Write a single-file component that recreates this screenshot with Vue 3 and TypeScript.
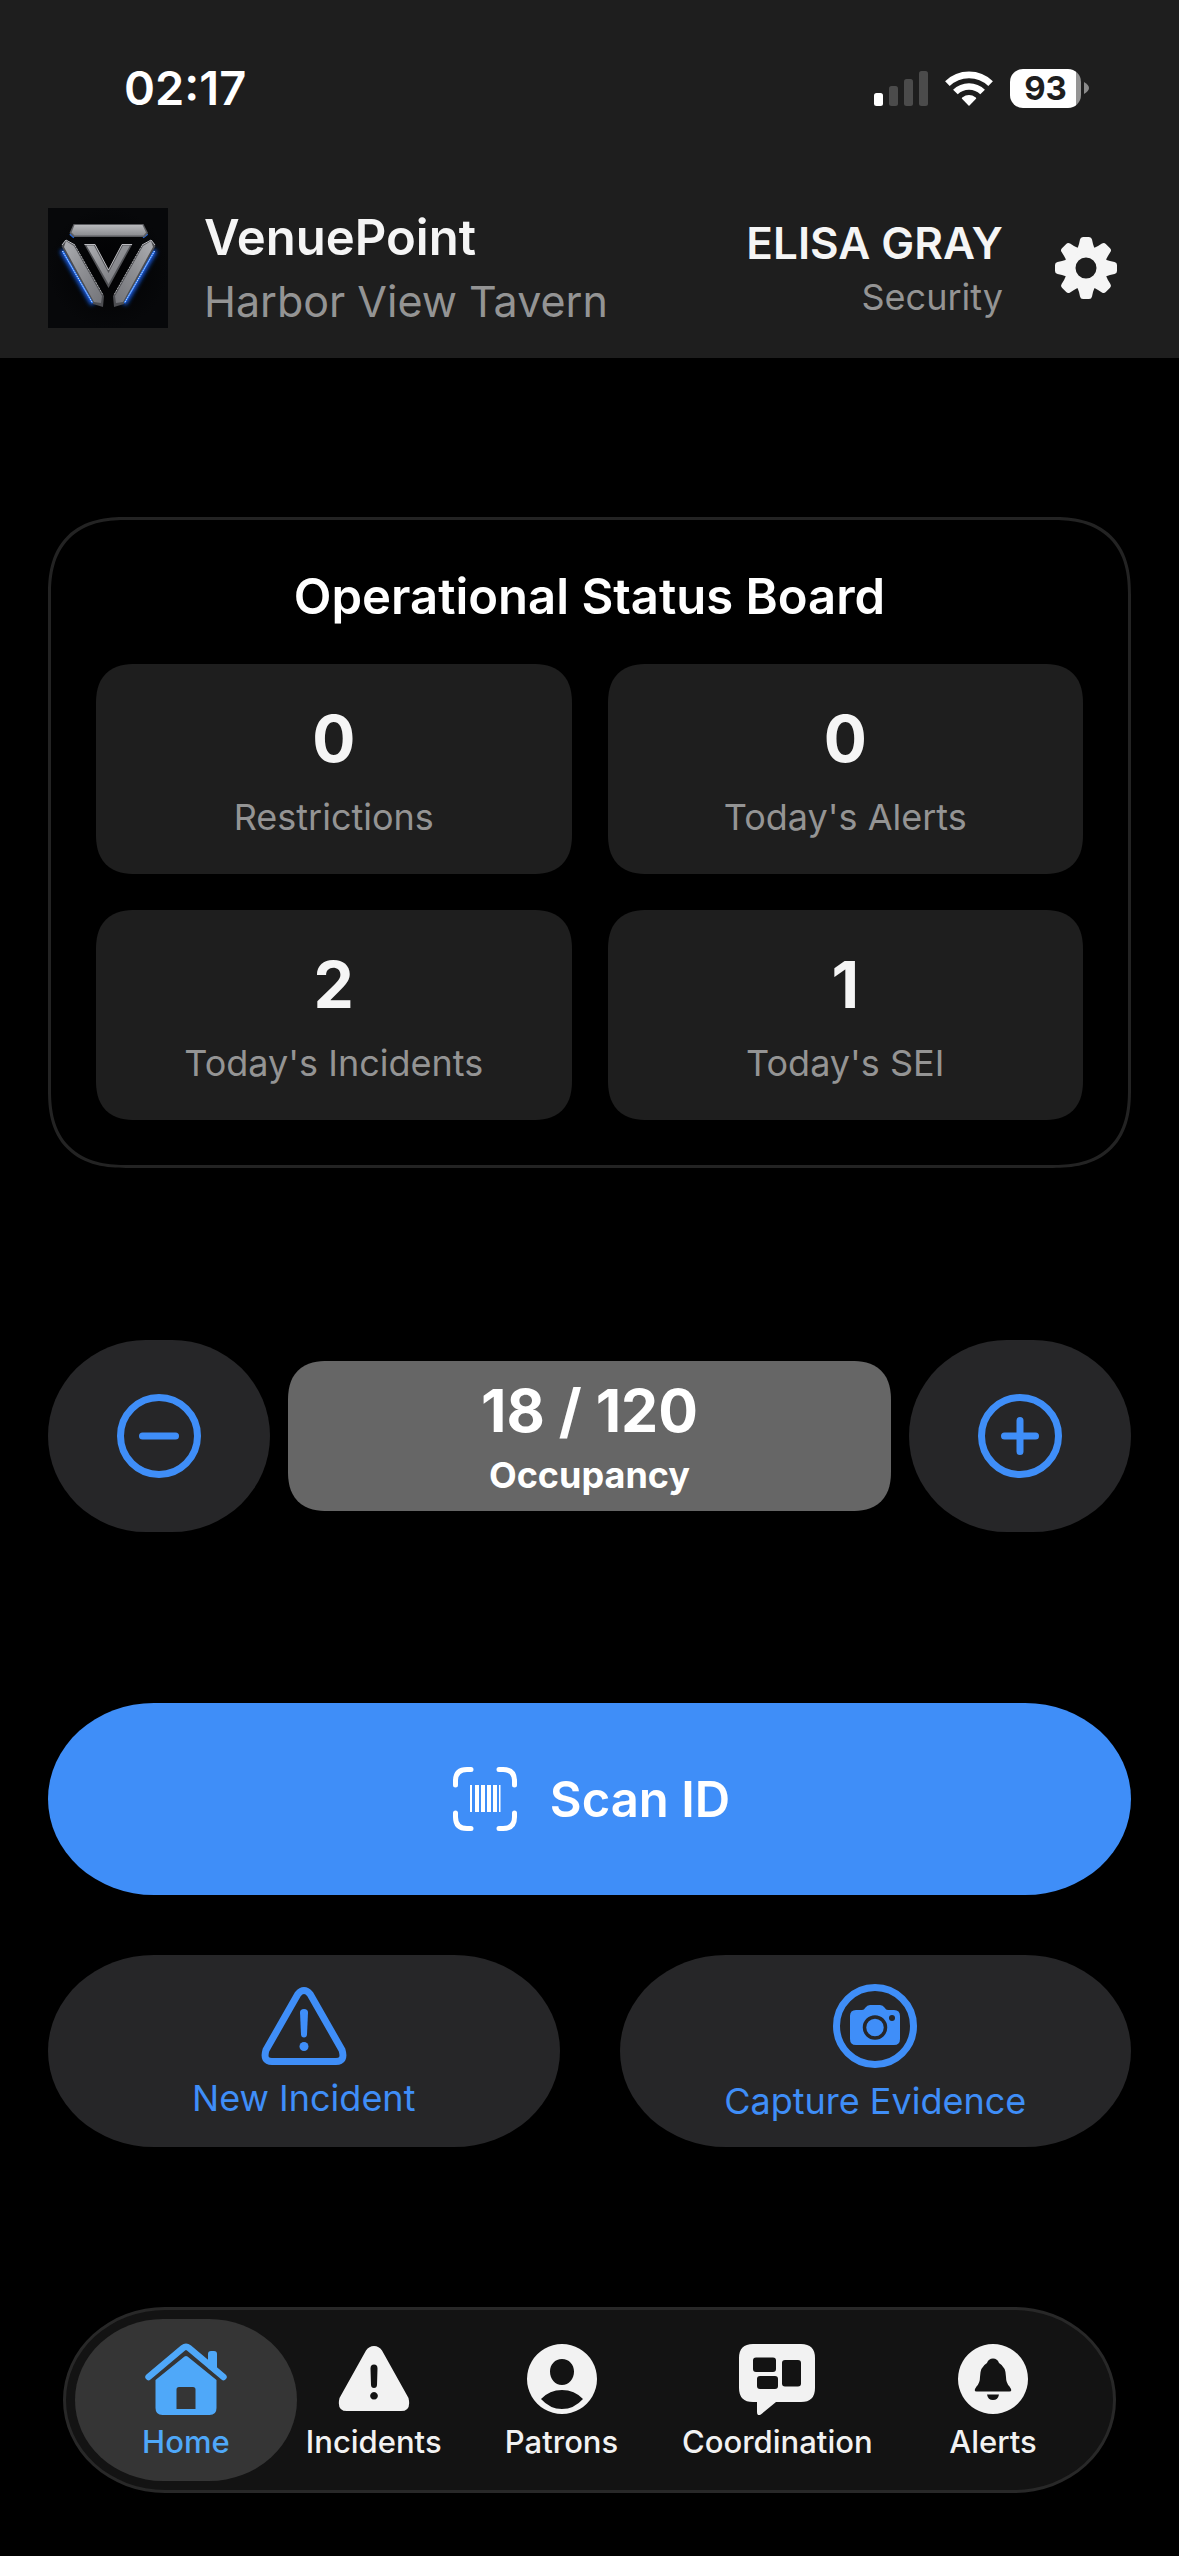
<script setup lang="ts">
import { ref } from 'vue'

interface Stat {
  value: number
  label: string
}

type TabId = 'home' | 'incidents' | 'patrons' | 'coordination' | 'alerts'

interface Tab {
  id: TabId
  label: string
}

const stats: Stat[] = [
  { value: 0, label: 'Restrictions' },
  { value: 0, label: "Today's Alerts" },
  { value: 2, label: "Today's Incidents" },
  { value: 1, label: "Today's SEI" },
]

const tabs: Tab[] = [
  { id: 'home', label: 'Home' },
  { id: 'incidents', label: 'Incidents' },
  { id: 'patrons', label: 'Patrons' },
  { id: 'coordination', label: 'Coordination' },
  { id: 'alerts', label: 'Alerts' },
]

const capacity = 120
const occupancy = ref(18)
const activeTab = ref<TabId>('home')

function changeOccupancy(step: number): void {
  occupancy.value = Math.min(capacity, Math.max(0, occupancy.value + step))
}
</script>

<template>
  <div class="app">
    <header class="header">
      <div class="status-bar">
        <time class="clock">02:17</time>
        <div class="indicators">
          <svg class="signal" viewBox="0 0 54 35" aria-hidden="true">
            <rect x="0" y="22" width="9" height="13" rx="2.5" fill="#fff" />
            <rect x="15" y="15" width="9" height="20" rx="2.5" fill="#4b4b4b" />
            <rect x="30" y="8" width="9" height="27" rx="2.5" fill="#4b4b4b" />
            <rect x="45" y="0" width="9" height="35" rx="2.5" fill="#4b4b4b" />
          </svg>
          <svg class="wifi" viewBox="0 0 48 35" aria-hidden="true">
            <g fill="none" stroke="#fff" stroke-width="6.6">
              <path d="M2.4 12.6 A31 31 0 0 1 45.6 12.6" />
              <path d="M10.4 21 A19.4 19.4 0 0 1 37.6 21" />
            </g>
            <path d="M24 35 L17 27.8 Q16.4 27 17.2 26.4 Q24 21.8 30.8 26.4 Q31.6 27 31 27.8 Z" fill="#fff" />
          </svg>
          <div class="battery">
            <span class="battery-level">93</span>
            <svg class="battery-cap" viewBox="0 0 5 12" aria-hidden="true">
              <path d="M0 0 Q5 3 5 6 Q5 9 0 12 Z" fill="#8a8a8a" />
            </svg>
          </div>
        </div>
      </div>

      <div class="identity">
        <svg class="logo" viewBox="0 0 120 120" role="img" aria-label="VenuePoint logo">
          <defs>
            <linearGradient id="steel" x1="0" y1="0" x2="1" y2="1">
              <stop offset="0" stop-color="#acadb1" />
              <stop offset="0.5" stop-color="#8d8e92" />
              <stop offset="1" stop-color="#74757a" />
            </linearGradient>
            <linearGradient id="steel-bar" x1="0" y1="0" x2="0" y2="1">
              <stop offset="0" stop-color="#b8b9bc" />
              <stop offset="1" stop-color="#8b8c90" />
            </linearGradient>
            <radialGradient id="plate">
              <stop offset="0" stop-color="#010102" />
              <stop offset="1" stop-color="#07080a" />
            </radialGradient>
            <filter id="glow" x="-50%" y="-20%" width="200%" height="140%">
              <feGaussianBlur stdDeviation="2" />
            </filter>
            <g id="wing">
              <path d="M14 42 L45 96" stroke="#1a62f0" stroke-width="5" filter="url(#glow)" />
              <path d="M17 32 L13.5 38 L45 96 L55 99 L56 88 L27 37 Z" fill="#4c4d51" />
              <path d="M18 33 L16 39 L46 94 L53 95 L54 88 L26 38 Z" fill="url(#steel)" />
              <path d="M14.500 43 L44.500 95" stroke="#2f7bf5" stroke-width="1.6" />
              <path d="M14.500 43 L44.500 95" stroke="#cfe0ff" stroke-width="1" stroke-dasharray="1.2 1.2" />
              <path d="M27 37.500 L55 87" stroke="#c4c5c8" stroke-width="0.8" stroke-dasharray="2 1" />
              <path d="M14 37 L18 32 L27 37" stroke="#bfc0c4" stroke-width="1" fill="none" />
            </g>
          </defs>
          <rect width="120" height="120" fill="url(#plate)" />
          <path d="M22 26 L26 29.500 M95 29.500 L99.500 26" stroke="#2767d8" stroke-width="2" fill="none" />
          <path d="M25.500 16 H95.500 L100 25 L96.500 29 H25.500 L21.500 25 Z" fill="#5b5c60" />
          <path d="M26.500 17 H94.500 L98 24.500 L95.500 27.500 H26.500 L23.500 24.500 Z" fill="url(#steel-bar)" />
          <use href="#wing" />
          <use href="#wing" transform="translate(121 0) scale(-1 1)" />
          <path d="M36 36 H47 L60.500 62 L74 36 H84.500 L60.500 80 Z" fill="#515256" />
          <path d="M38.500 37.500 H46 L60.500 65 L75 37.500 H82 L60.500 76 Z" fill="url(#steel)" />
          <path d="M36.500 36.500 H47 L60.500 62 L74 36.500 H84" stroke="#c9cacd" stroke-width="0.9" fill="none" />
        </svg>
        <div class="venue">
          <h1 class="app-name">VenuePoint</h1>
          <p class="venue-name">Harbor View Tavern</p>
        </div>
        <div class="user">
          <p class="user-name">ELISA GRAY</p>
          <p class="user-role">Security</p>
        </div>
        <button class="settings" type="button" aria-label="Settings">
          <svg viewBox="-31 -31 62 62" fill="#f5f5f5" aria-hidden="true">
            <circle r="16" fill="none" stroke="#f5f5f5" stroke-width="11" />
            <path
              v-for="n in 8"
              :key="n"
              :transform="`rotate(${n * 45})`"
              d="M-11 -17 Q-7.500 -20 -7 -24 L-6 -28.500 Q-5.500 -31 -3 -31 H3 Q5.500 -31 6 -28.500 L7 -24 Q7.500 -20 11 -17 Z"
            />
          </svg>
        </button>
      </div>
    </header>

    <main class="content">
      <section class="board" aria-labelledby="board-title">
        <h2 id="board-title" class="board-title">Operational Status Board</h2>
        <div class="stats">
          <div v-for="stat in stats" :key="stat.label" class="stat">
            <span class="stat-value">{{ stat.value }}</span>
            <span class="stat-label">{{ stat.label }}</span>
          </div>
        </div>
      </section>

      <section class="counter" aria-label="Occupancy counter">
        <button class="step" type="button" aria-label="Decrease occupancy" @click="changeOccupancy(-1)">
          <svg viewBox="0 0 84 84" fill="none" stroke="currentColor" stroke-width="7" stroke-linecap="round">
            <circle cx="42" cy="42" r="38.500" />
            <path d="M25.500 42 H58.500" />
          </svg>
        </button>
        <div class="occupancy">
          <span class="occupancy-value">{{ occupancy }} / {{ capacity }}</span>
          <span class="occupancy-label">Occupancy</span>
        </div>
        <button class="step" type="button" aria-label="Increase occupancy" @click="changeOccupancy(1)">
          <svg viewBox="0 0 84 84" fill="none" stroke="currentColor" stroke-width="7" stroke-linecap="round">
            <circle cx="42" cy="42" r="38.500" />
            <path d="M26.500 42 H57.500 M42 26.500 V57.500" />
          </svg>
        </button>
      </section>

      <section class="actions" aria-label="Actions">
        <button class="scan" type="button">
          <svg class="scan-icon" viewBox="0 0 64 64" aria-hidden="true">
            <path
              d="M2.500 18 V14 Q2.500 2.500 14 2.500 H18 M46 2.500 H50 Q61.500 2.500 61.500 14 V18 M61.500 46 V50 Q61.500 61.500 50 61.500 H46 M18 61.500 H14 Q2.500 61.500 2.500 50 V46"
              fill="none"
              stroke="#fff"
              stroke-width="5"
              stroke-linecap="round"
            />
            <path d="M17 18h2v27h-2z M22 18h4v27h-4z M28 18h4v27h-4z M34 18h4v27h-4z M40 18h4v27h-4z M46 18h1.500v27h-1.500z" fill="#fff" />
          </svg>
          <span>Scan ID</span>
        </button>
        <div class="action-pair">
          <button class="action" type="button">
            <svg class="warning-icon" viewBox="0 0 86 78" aria-hidden="true">
              <path
                d="M36.800 7.200 Q43 -0.200 49.200 7.200 L81 63 Q84.500 74.500 75 74.500 H11 Q1.500 74.500 5 63 Z"
                fill="none"
                stroke="currentColor"
                stroke-width="7"
                stroke-linejoin="round"
              />
              <path d="M39 25.500 Q39 22 43 22 Q47 22 47 25.500 L46 47.500 Q45.800 50.500 43 50.500 Q40.200 50.500 40 47.500 Z" fill="currentColor" />
              <circle cx="43" cy="59.500" r="4.500" fill="currentColor" />
            </svg>
            <span>New Incident</span>
          </button>
          <button class="action" type="button">
            <svg class="camera-icon" viewBox="0 0 84 84" aria-hidden="true">
              <circle cx="42" cy="42" r="38.500" fill="none" stroke="currentColor" stroke-width="7" />
              <path
                d="M23 26 H29 Q31 26 32.500 23.500 Q34 21 37 21 H47 Q50 21 51.500 23.500 Q53 26 55 26 H61 Q67 26 67 32 V55 Q67 61 61 61 H23 Q17 61 17 55 V32 Q17 26 23 26 Z"
                fill="currentColor"
              />
              <circle cx="42" cy="43.500" r="10.500" fill="none" stroke="#262628" stroke-width="3.500" />
              <circle cx="59" cy="34" r="3" fill="#262628" />
            </svg>
            <span>Capture Evidence</span>
          </button>
        </div>
      </section>
    </main>

    <nav class="tab-bar" aria-label="Main">
      <a
        v-for="tab in tabs"
        :key="tab.id"
        href="#"
        class="tab"
        :class="{ active: tab.id === activeTab }"
        :aria-current="tab.id === activeTab ? 'page' : undefined"
        @click.prevent="activeTab = tab.id"
      >
        <svg v-if="tab.id === 'home'" class="tab-icon" viewBox="0 0 82 72" aria-hidden="true">
          <path
            d="M3.500 34 L38 5 Q41 2.500 44 5 L78.500 34"
            fill="none"
            stroke="currentColor"
            stroke-width="6.400"
            stroke-linecap="round"
          />
          <path d="M63 25 V11 Q63 8 66 8 H69 Q72 8 72 11 V32 Z" fill="currentColor" />
          <path
            fill-rule="evenodd"
            d="M10.500 37 L39.500 13.500 Q41 12.500 42.500 13.500 L71.500 37 V65 Q71.500 72 64.500 72 H17.500 Q10.500 72 10.500 65 Z M31.500 66 H50.500 V46.500 Q50.500 44 48 44 H34 Q31.500 44 31.500 46.500 Z"
            fill="currentColor"
          />
        </svg>
        <svg v-else-if="tab.id === 'incidents'" class="tab-icon" viewBox="0 0 72 72" aria-hidden="true">
          <path
            fill-rule="evenodd"
            d="M28 7.500 Q31 3 36 3 Q41 3 44 7.500 L70.500 55 Q73.500 68 63 68 H9 Q-1.500 68 1.500 55 Z M32.500 25.500 L33 42 Q33.200 45 36 45 Q38.800 45 39 42 L39.500 25.500 Q39.500 21.500 36 21.500 Q32.500 21.500 32.500 25.500 Z M36 49 a3.800 3.800 0 1 0 0.010 0 Z"
            fill="currentColor"
          />
        </svg>
        <svg v-else-if="tab.id === 'patrons'" class="tab-icon" viewBox="0 0 72 72" aria-hidden="true">
          <path
            fill-rule="evenodd"
            d="M36 1 a35 35 0 1 0 0.010 0 Z M36 16 C43 16 48 21.500 48 28.500 C48 36 43 42 36 42 C29 42 24 36 24 28.500 C24 21.500 29 16 36 16 Z M15 56 Q23.500 47 36 47 Q48.500 47 57 56 Q48 66 36 66 Q24 66 15 56 Z"
            fill="currentColor"
          />
        </svg>
        <svg v-else-if="tab.id === 'coordination'" class="tab-icon" viewBox="0 0 76 72" aria-hidden="true">
          <path
            fill-rule="evenodd"
            d="M14 1 H62 Q76 1 76 15 V45 Q76 59 62 59 H37 L22.500 71 Q18 74 18 69 V59 H14 Q0 59 0 45 V15 Q0 1 14 1 Z M17 14.500 Q14 14.500 14 17.500 V26 Q14 29 17 29 H34 Q37 29 37 26 V17.500 Q37 14.500 34 14.500 Z M21 33 Q18 33 18 36 V43 Q18 46 21 46 H36 Q39 46 39 43 V36 Q39 33 36 33 Z M46 17 Q43 17 43 20 V40.500 Q43 43.500 46 43.500 H59 Q62 43.500 62 40.500 V20 Q62 17 59 17 Z"
            fill="currentColor"
          />
        </svg>
        <svg v-else class="tab-icon" viewBox="0 0 72 72" aria-hidden="true">
          <path
            fill-rule="evenodd"
            d="M36 1 a35 35 0 1 0 0.010 0 Z M36 15.500 Q40.500 15.500 42 20 Q49 24 49 34 Q49 40 52.500 43.500 Q56 48.500 52.500 48.500 H19.500 Q16 48.500 19.500 43.500 Q23 40 23 34 Q23 24 30 20 Q31.500 15.500 36 15.500 Z M30 51.500 H42 Q41 57 36 57 Q31 57 30 51.500 Z"
            fill="currentColor"
          />
        </svg>
        <span>{{ tab.label }}</span>
      </a>
    </nav>
  </div>
</template>

<style>
body {
  margin: 0;
  background: #000;
}
</style>

<style scoped>
.app {
  display: flex;
  flex-direction: column;
  min-height: 100vh;
  background: #000;
  color: #f5f5f5;
  font-family: Inter, 'Liberation Sans', sans-serif;
}

h1,
h2,
p {
  margin: 0;
}

button {
  border: 0;
  padding: 0;
  font: inherit;
  cursor: pointer;
}

svg {
  display: block;
  flex: none;
}

.header {
  background: #1e1e1e;
}

.status-bar {
  display: flex;
  align-items: center;
  justify-content: space-between;
  height: 176px;
  padding: 0 90px 0 124px;
}

.clock {
  color: #fff;
  font-size: 47px;
  font-weight: 600;
  line-height: 60px;
}

.indicators {
  display: flex;
  align-items: center;
  gap: 17px;
}

.signal {
  width: 54px;
  height: 35px;
}

.wifi {
  width: 48px;
  height: 35px;
}

.battery {
  display: flex;
  align-items: center;
  gap: 3px;
}

.battery-level {
  width: 71px;
  border-radius: 13px;
  background: linear-gradient(90deg, #fff 66px, #949494 66px);
  color: #1e1e1e;
  font-size: 33px;
  font-weight: 700;
  line-height: 39px;
  text-align: center;
}

.battery-cap {
  width: 5px;
  height: 12px;
}

.identity {
  display: flex;
  align-items: center;
  padding: 32px 62px 30px 48px;
}

.logo {
  width: 120px;
  height: 120px;
  margin-right: 36px;
}

.venue {
  display: flex;
  flex: 1;
  flex-direction: column;
  gap: 6px;
}

.app-name {
  font-size: 49px;
  font-weight: 600;
  line-height: 60px;
}

.venue-name {
  color: #949494;
  font-size: 43px;
  line-height: 54px;
}

.user {
  display: flex;
  flex-direction: column;
  gap: 6px;
  padding-bottom: 2px;
  text-align: right;
}

.user-name {
  font-size: 44px;
  font-weight: 600;
  line-height: 54px;
}

.user-role {
  color: #949494;
  font-size: 36px;
  line-height: 42px;
}

.settings {
  margin-left: 52px;
  background: none;
}

.settings svg {
  width: 62px;
  height: 62px;
}

.content {
  display: flex;
  flex: 1;
  flex-direction: column;
  justify-content: space-between;
  gap: 48px;
  padding: 159px 48px 160px;
}

.board {
  display: flex;
  flex-direction: column;
  gap: 35px;
  padding: 45px;
  border: 3px solid #232323;
  border-radius: 64px;
}

.board-title {
  color: #fff;
  font-size: 49px;
  font-weight: 600;
  line-height: 64px;
  text-align: center;
}

.stats {
  display: grid;
  grid-template-columns: 1fr 1fr;
  gap: 36px;
}

.stat {
  display: flex;
  flex-direction: column;
  align-items: center;
  gap: 18px;
  padding: 36px 0;
  border-radius: 32px;
  background: #1e1e1e;
}

.stat-value {
  font-size: 64px;
  font-weight: 700;
  line-height: 78px;
}

.stat-label {
  color: #949494;
  font-size: 36px;
  line-height: 42px;
}

.counter {
  display: flex;
  align-items: center;
  gap: 18px;
}

.step {
  display: flex;
  align-items: center;
  justify-content: center;
  width: 222px;
  height: 192px;
  border-radius: 98px / 96px;
  background: #262628;
  color: #3f8ef8;
}

.step svg {
  width: 84px;
  height: 84px;
}

.occupancy {
  display: flex;
  flex: 1;
  flex-direction: column;
  align-items: center;
  justify-content: center;
  gap: 7px;
  height: 150px;
  border-radius: 32px;
  background: #666;
  color: #fff;
}

.occupancy-value {
  font-size: 59px;
  font-weight: 700;
  line-height: 72px;
}

.occupancy-label {
  font-size: 36px;
  font-weight: 700;
  line-height: 42px;
}

.actions {
  display: flex;
  flex-direction: column;
  gap: 60px;
}

.scan {
  display: flex;
  align-items: center;
  justify-content: center;
  gap: 33px;
  height: 192px;
  padding-left: 4px;
  border-radius: 106px / 96px;
  background: #3f8ef8;
  color: #fff;
  font-size: 49px;
  font-weight: 600;
}

.scan-icon {
  width: 64px;
  height: 64px;
}

.action-pair {
  display: grid;
  grid-template-columns: 1fr 1fr;
  gap: 60px;
}

.action {
  display: flex;
  flex-direction: column;
  align-items: center;
  justify-content: center;
  gap: 12px;
  height: 192px;
  padding-top: 3px;
  border-radius: 106px / 96px;
  background: #262628;
  color: #3f8ef8;
  font-size: 36px;
  line-height: 42px;
}

.warning-icon {
  width: 86px;
  height: 78px;
}

.camera-icon {
  width: 84px;
  height: 84px;
}

.tab-bar {
  display: grid;
  grid-template-columns: 47fr 47fr 47fr 61fr 47fr;
  margin: 0 63px 63px;
  padding: 9px 26px;
  border: 3px solid #282828;
  border-radius: 102px / 93px;
  background: #131313;
}

.tab {
  position: relative;
  display: flex;
  flex-direction: column;
  align-items: center;
  gap: 9px;
  height: 138px;
  padding-top: 24px;
  color: #f2f2f2;
  font-size: 31px;
  font-weight: 500;
  line-height: 36px;
  text-decoration: none;
}

.tab.active {
  color: #4fa8f9;
}

.tab.active::before {
  position: absolute;
  inset: 0 -17px;
  border-radius: 88px / 81px;
  background: #353535;
  content: '';
}

.tab > * {
  position: relative;
}

.tab-icon {
  height: 72px;
}

/* Continuous corners where the browser can draw them */
@supports (corner-shape: superellipse(1.3)) {
  .board {
    border-radius: 78px;
    corner-shape: superellipse(1.3);
  }

  .stat,
  .occupancy {
    border-radius: 40px;
    corner-shape: superellipse(1.3);
  }
}
</style>
